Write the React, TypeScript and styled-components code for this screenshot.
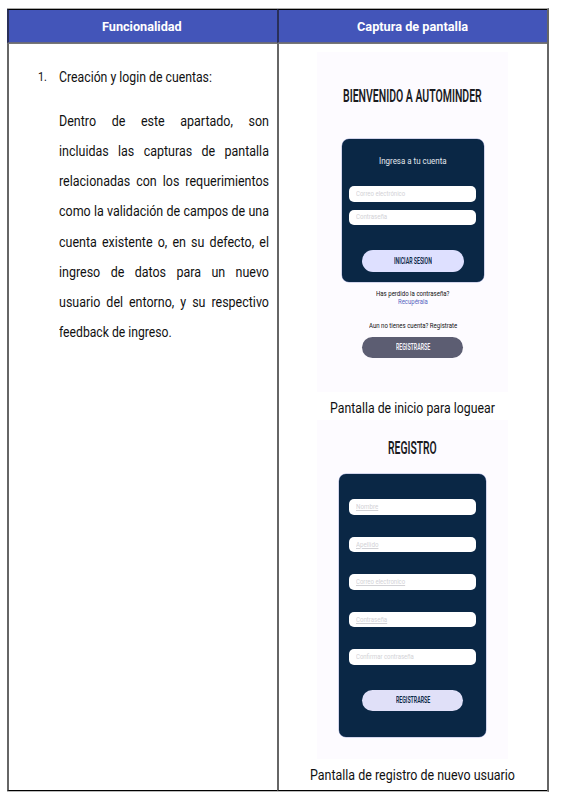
import React, { useLayoutEffect, useRef, useState } from "react";
import styled, { createGlobalStyle } from "styled-components";

const GlobalStyle = createGlobalStyle`
  * { box-sizing: border-box; }
  body { margin: 0; background: #fff; font-family: Roboto, "Liberation Sans", sans-serif; color: #111; }
`;

const Page = styled.main`
  width: 565px;
  height: 804px;
  padding: 8px 0 0 7px;
`;
const Table = styled.section`
  width: 542px;
  height: 784px;
  display: grid;
  grid-template-columns: 270px 270px;
  grid-template-rows: 34px 748px;
  border-right: 2px solid #666;
  border-bottom: 1px solid #bbb;
  border-top: 1px solid #aaa;
`;
const HeaderCell = styled.div`
  display: flex;
  justify-content: center;
  background: #4355b9;
  border-top: 1px solid #000;
  border-left: 2px solid #292f59;
  border-bottom: 1px solid #68697b;
  padding: 8px 2px 0 0;
`;
const Cell = styled.div`
  border-left: 2px solid #666;
  border-top: 1px solid #777;
  border-bottom: 1px solid #000;
`;
const Description = styled(Cell)`
  padding: 18px 8px 0 29px;
`;
const Captures = styled(Cell)`
  display: flex;
  flex-direction: column;
  align-items: center;
  padding: 8px 1px 0 0;
`;
const ListTitle = styled.div`
  display: flex;
  height: 30px;
  gap: 12px;
  margin-bottom: 14px;
`;
const Paragraph = styled.div`
  margin-left: 21px;
  width: 210px;
`;
const Justified = styled.p`
  margin: 0;
  width: 232px;
  height: 30.15px;
  line-height: 30px;
  font-size: 13.8px;
  white-space: nowrap;
  text-align: justify;
  text-align-last: justify;
  transform: scaleX(0.905);
  transform-origin: left;
`;

const FitBox = styled.span<{ $w: number; $size: number; $line: number; $color: string; $weight: number; $underline?: boolean }>`
  display: block;
  flex: none;
  width: ${(p) => p.$w}px;
  height: ${(p) => p.$line}px;
  line-height: ${(p) => p.$line}px;
  font-size: ${(p) => p.$size}px;
  font-weight: ${(p) => p.$weight};
  color: ${(p) => p.$color};
  text-decoration: ${(p) => (p.$underline ? "underline" : "none")};
  white-space: nowrap;
`;
const FitInner = styled.span`
  display: inline-block;
  text-decoration: inherit;
  transform-origin: left;
  vertical-align: top;
`;

interface FitProps {
  width: number;
  size: number;
  line: number;
  color?: string;
  weight?: number;
  underline?: boolean;
  children: string;
}

/* Condenses a single line of text to the given width. */
function Fit({ width, size, line, color = "#111", weight = 400, underline, children }: FitProps) {
  const ref = useRef<HTMLSpanElement>(null);
  const [scale, setScale] = useState(1);
  useLayoutEffect(() => {
    if (ref.current) setScale(width / ref.current.offsetWidth);
  }, [width, children]);
  return (
    <FitBox $w={width} $size={size} $line={line} $color={color} $weight={weight} $underline={underline}>
      <FitInner ref={ref} style={{ transform: `scaleX(${scale})` }}>{children}</FitInner>
    </FitBox>
  );
}

const Screen = styled.article<{ $height: number; $top: number }>`
  flex: none;
  width: 191px;
  height: ${(p) => p.$height}px;
  padding-top: ${(p) => p.$top}px;
  display: flex;
  flex-direction: column;
  align-items: center;
  background: #fdfbff;
`;
const Card = styled.div<{ $width: number; $height: number; $top: number; $pad: number }>`
  flex: none;
  width: ${(p) => p.$width}px;
  height: ${(p) => p.$height}px;
  margin-top: ${(p) => p.$top}px;
  padding-top: ${(p) => p.$pad}px;
  display: flex;
  flex-direction: column;
  align-items: center;
  background: #0a2745;
  border-radius: 7px;
  box-shadow: 0 0 0 0.5px #a9b0d8;
`;
const Fields = styled.div<{ $gap: number; $top: number }>`
  display: flex;
  flex-direction: column;
  gap: ${(p) => p.$gap}px;
  margin-top: ${(p) => p.$top}px;
`;
const Field = styled.div`
  width: 127px;
  height: 15.5px;
  padding-left: 7px;
  background: #fff;
  border-radius: 5px;
`;
const Pill = styled.div<{ $bg: string; $top: number; $height: number; $width: number }>`
  flex: none;
  width: ${(p) => p.$width}px;
  height: ${(p) => p.$height}px;
  margin-top: ${(p) => p.$top}px;
  display: flex;
  align-items: center;
  justify-content: center;
  border-radius: 11px;
  background: ${(p) => p.$bg};
`;
const Links = styled.div`
  display: flex;
  flex-direction: column;
  align-items: center;
  padding-top: 8px;
`;
const Gap = styled.div`
  height: 16px;
`;
const Caption = styled.div`
  height: 28px;
  padding-top: 6px;
`;

const lines = [
  "Dentro de este apartado, son",
  "incluidas las capturas de pantalla",
  "relacionadas con los requerimientos",
  "como la validación de campos de una",
  "cuenta existente o, en su defecto, el",
  "ingreso de datos para un nuevo",
  "usuario del entorno, y su respectivo",
];
const registerFields = [
  { label: "Nombre", width: 22, underline: true },
  { label: "Apellido", width: 22, underline: true },
  { label: "Correo electronico", width: 49, underline: true },
  { label: "Contraseña", width: 31, underline: true },
  { label: "Confirmar contraseña", width: 58, underline: false },
];

export default function App() {
  return (
    <>
      <GlobalStyle />
      <Page>
        <Table>
          <HeaderCell><Fit width={80} size={13.3} line={18} weight={700} color="#fff">Funcionalidad</Fit></HeaderCell>
          <HeaderCell><Fit width={111} size={13.3} line={18} weight={700} color="#fff">Captura de pantalla</Fit></HeaderCell>
          <Description>
            <ListTitle>
              <Fit width={9} size={13.3} line={30}>1.</Fit>
              <Fit width={153} size={13.8} line={30}>Creación y login de cuentas:</Fit>
            </ListTitle>
            <Paragraph>
              {lines.map((text) => <Justified key={text}>{text}</Justified>)}
              <Fit width={113} size={13.8} line={30}>feedback de ingreso.</Fit>
            </Paragraph>
          </Description>
          <Captures>
            <Screen $height={340} $top={33}>
              <Fit width={139} size={17.5} line={22} weight={600} color="#1b1b1f">BIENVENIDO A AUTOMINDER</Fit>
              <Card $width={142} $height={143} $top={32} $pad={16}>
                <Fit width={68} size={8.3} line={13} color="#e4e8ee">Ingresa a tu cuenta</Fit>
                <Fields $gap={8} $top={18}>
                  <Field><Fit width={49} size={6.5} line={16.5} color="#d2d2d6">Correo electrónico</Fit></Field>
                  <Field><Fit width={31} size={6.5} line={15.5} color="#d2d2d6">Contraseña</Fit></Field>
                </Fields>
                <Pill $bg="#dee0ff" $top={25} $height={22} $width={102}>
                  <Fit width={38} size={8.8} line={22} weight={600} color="#0a2745">INICIAR SESION</Fit>
                </Pill>
              </Card>
              <Links>
                <Fit width={73} size={6.4} line={8}>Has perdido la contraseña?</Fit>
                <Fit width={30} size={6.4} line={8} color="#5865c0">Recupérala</Fit>
                <Gap />
                <Fit width={88} size={6.4} line={9}>Aun no tienes cuenta? Registrate</Fit>
              </Links>
              <Pill $bg="#5c5d72" $top={6} $height={20.5} $width={101}>
                <Fit width={34} size={8.8} line={20} weight={600} color="#f4f3fa">REGISTRARSE</Fit>
              </Pill>
            </Screen>
            <Caption><Fit width={165} size={13.8} line={20}>Pantalla de inicio para loguear</Fit></Caption>
            <Screen $height={339} $top={17}>
              <Fit width={49} size={17.5} line={22} weight={600} color="#1b1b1f">REGISTRO</Fit>
              <Card $width={147} $height={263} $top={15} $pad={25}>
                <Fields $gap={22} $top={0}>
                  {registerFields.map((f) => (
                    <Field key={f.label}>
                      <Fit width={f.width} size={6.5} line={16} color="#d2d2d6" underline={f.underline}>{f.label}</Fit>
                    </Field>
                  ))}
                </Fields>
                <Pill $bg="#e0e0f8" $top={25.5} $height={20.5} $width={101}>
                  <Fit width={34} size={8.8} line={20} weight={600} color="#0a2745">REGISTRARSE</Fit>
                </Pill>
              </Card>
            </Screen>
            <Caption><Fit width={205} size={13.8} line={20}>Pantalla de registro de nuevo usuario</Fit></Caption>
          </Captures>
        </Table>
      </Page>
    </>
  );
}
